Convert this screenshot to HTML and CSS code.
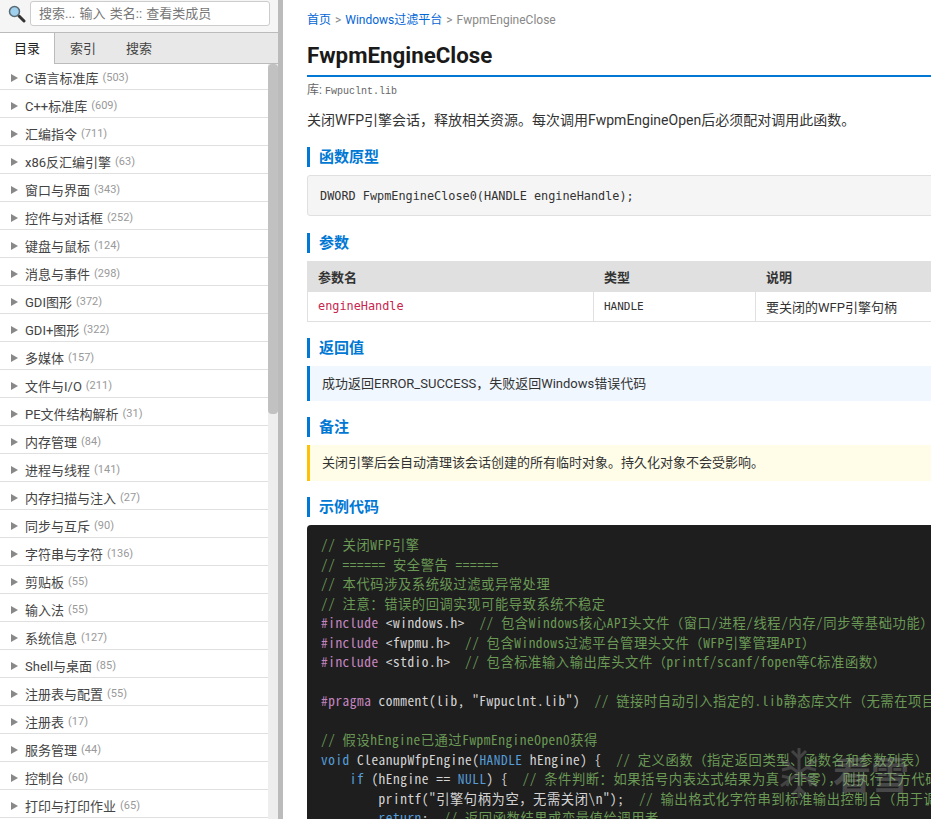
FILE: index.html
```html
<!DOCTYPE html>
<html lang="zh-CN">
<head>
    <meta charset="UTF-8">
    <title>FwpmEngineClose</title>
    <link rel="stylesheet" href="styles.css">
</head>
<body>
    <div class="sidebar">
        <div class="search-bar">
            <svg class="search-icon" width="18" height="18" viewBox="0 0 18 18">
                <line x1="11" y1="11" x2="16" y2="16" stroke="#333" stroke-width="3" stroke-linecap="round"/>
                <circle cx="6.5" cy="6.5" r="5" fill="#9fd0ee" stroke="#5a6a75" stroke-width="1.5"/>
            </svg>
            <input class="search-input" type="text" placeholder="搜索... 输入 类名:: 查看类成员">
        </div>
        <div class="tabs">
            <div class="tab active">目录</div>
            <div class="tab">索引</div>
            <div class="tab">搜索</div>
        </div>
        <div class="tree-wrap">
            <ul class="tree">
                <li><span class="arrow"></span>C语言标准库<span class="count">(503)</span></li>
                <li><span class="arrow"></span>C++标准库<span class="count">(609)</span></li>
                <li><span class="arrow"></span>汇编指令<span class="count">(711)</span></li>
                <li><span class="arrow"></span>x86反汇编引擎<span class="count">(63)</span></li>
                <li><span class="arrow"></span>窗口与界面<span class="count">(343)</span></li>
                <li><span class="arrow"></span>控件与对话框<span class="count">(252)</span></li>
                <li><span class="arrow"></span>键盘与鼠标<span class="count">(124)</span></li>
                <li><span class="arrow"></span>消息与事件<span class="count">(298)</span></li>
                <li><span class="arrow"></span>GDI图形<span class="count">(372)</span></li>
                <li><span class="arrow"></span>GDI+图形<span class="count">(322)</span></li>
                <li><span class="arrow"></span>多媒体<span class="count">(157)</span></li>
                <li><span class="arrow"></span>文件与I/O<span class="count">(211)</span></li>
                <li><span class="arrow"></span>PE文件结构解析<span class="count">(31)</span></li>
                <li><span class="arrow"></span>内存管理<span class="count">(84)</span></li>
                <li><span class="arrow"></span>进程与线程<span class="count">(141)</span></li>
                <li><span class="arrow"></span>内存扫描与注入<span class="count">(27)</span></li>
                <li><span class="arrow"></span>同步与互斥<span class="count">(90)</span></li>
                <li><span class="arrow"></span>字符串与字符<span class="count">(136)</span></li>
                <li><span class="arrow"></span>剪贴板<span class="count">(55)</span></li>
                <li><span class="arrow"></span>输入法<span class="count">(55)</span></li>
                <li><span class="arrow"></span>系统信息<span class="count">(127)</span></li>
                <li><span class="arrow"></span>Shell与桌面<span class="count">(85)</span></li>
                <li><span class="arrow"></span>注册表与配置<span class="count">(55)</span></li>
                <li><span class="arrow"></span>注册表<span class="count">(17)</span></li>
                <li><span class="arrow"></span>服务管理<span class="count">(44)</span></li>
                <li><span class="arrow"></span>控制台<span class="count">(60)</span></li>
                <li><span class="arrow"></span>打印与打印作业<span class="count">(65)</span></li>
            </ul>
            <div class="scrollbar"><div class="thumb"></div></div>
        </div>
    </div>
    <div class="divider"></div>
    <div class="content">
        <div class="breadcrumb"><a>首页</a><span class="sep">&gt;</span><a>Windows过滤平台</a><span class="sep">&gt;</span>FwpmEngineClose</div>
        <h1>FwpmEngineClose</h1>
        <div class="lib">库: <code>Fwpuclnt.lib</code></div>
        <p class="desc">关闭WFP引擎会话，释放相关资源。每次调用FwpmEngineOpen后必须配对调用此函数。</p>

        <h2>函数原型</h2>
        <pre class="proto">DWORD FwpmEngineClose0(HANDLE engineHandle);</pre>

        <h2>参数</h2>
        <table class="params">
            <tr><th class="col-name">参数名</th><th class="col-type">类型</th><th>说明</th></tr>
            <tr><td><code class="param-name">engineHandle</code></td><td><code class="param-type">HANDLE</code></td><td>要关闭的WFP引擎句柄</td></tr>
        </table>

        <h2>返回值</h2>
        <div class="note note-info">成功返回ERROR_SUCCESS，失败返回Windows错误代码</div>

        <h2>备注</h2>
        <div class="note note-warn">关闭引擎后会自动清理该会话创建的所有临时对象。持久化对象不会受影响。</div>

        <h2>示例代码</h2>
        <pre class="code"><span class="c">// 关闭WFP引擎</span>
<span class="c">// ====== 安全警告 ======</span>
<span class="c">// 本代码涉及系统级过滤或异常处理</span>
<span class="c">// 注意：错误的回调实现可能导致系统不稳定</span>
<span class="p">#include</span> &lt;windows.h&gt;  <span class="c">// 包含Windows核心API头文件（窗口/进程/线程/内存/同步等基础功能）</span>
<span class="p">#include</span> &lt;fwpmu.h&gt;  <span class="c">// 包含Windows过滤平台管理头文件（WFP引擎管理API）</span>
<span class="p">#include</span> &lt;stdio.h&gt;  <span class="c">// 包含标准输入输出库头文件（printf/scanf/fopen等C标准函数）</span>

<span class="p">#pragma</span> comment(lib, "Fwpuclnt.lib")  <span class="c">// 链接时自动引入指定的.lib静态库文件（无需在项目设置中添加）</span>

<span class="c">// 假设hEngine已通过FwpmEngineOpen0获得</span>
<span class="k">void</span> CleanupWfpEngine(<span class="k">HANDLE</span> hEngine) {  <span class="c">// 定义函数（指定返回类型、函数名和参数列表）</span>
    <span class="k">if</span> (hEngine == <span class="k">NULL</span>) {  <span class="c">// 条件判断：如果括号内表达式结果为真（非零），则执行下方代码块</span>
        printf("引擎句柄为空，无需关闭\n");  <span class="c">// 输出格式化字符串到标准输出控制台（用于调试）</span>
        <span class="k">return</span>;  <span class="c">// 返回函数结果或变量值给调用者</span></pre>
    </div>
    <div class="watermark">
        <svg width="38" height="52" viewBox="0 0 38 52">
            <g stroke="#999" stroke-width="3" fill="none">
                <line x1="19" y1="1" x2="19" y2="51"/>
                <line x1="1" y1="13" x2="37" y2="39"/>
                <line x1="37" y1="13" x2="1" y2="39"/>
                <path d="M12 4l7 7 7-7M12 48l7-7 7 7M2 23l8-2-3-8M36 23l-8-2 3-8M2 29l8 2-3 8M36 29l-8 2 3 8"/>
            </g>
        </svg>
        <span class="wm-text">看雪</span>
    </div>
</body>
</html>
```

FILE: styles.css
```css
* {
    box-sizing: border-box;
}

html, body {
    height: 100%;
}

body {
    margin: 0;
    display: flex;
    overflow: hidden;
    background: #fff;
    color: #333;
    font-family: Roboto, "Noto Sans CJK SC", sans-serif;
    font-size: 13px;
}

/* left panel */
.sidebar {
    width: 278px;
    flex: none;
    display: flex;
    flex-direction: column;
    height: 819px;
    background: #f5f5f5;
}

.search-bar {
    height: 33px;
    display: flex;
    align-items: flex-start;
    gap: 4px;
    padding: 1px 8px 0;
    border-bottom: 1px solid #bbb;
    background: #f5f5f5;
}

.search-icon {
    flex: none;
    margin-top: 4px;
}

.search-input {
    flex: 1;
    height: 25px;
    min-width: 0;
    padding: 0 8px;
    border: 1px solid #ccc;
    border-radius: 3px;
    font-family: Roboto, "Noto Sans CJK SC", sans-serif;
    font-size: 13px;
    word-spacing: 1px;
}

.search-input::placeholder {
    color: #777;
}

.tabs {
    height: 31px;
    flex: none;
    display: flex;
    background: #e8e8e8;
    border-bottom: 1px solid #bbb;
}

.tab {
    width: 56px;
    line-height: 31px;
    text-align: center;
    color: #444;
}

.tab.active {
    width: 55px;
    height: 31px;
    background: #fff;
    border-right: 1px solid #bbb;
    color: #222;
}

.tree-wrap {
    flex: 1;
    display: flex;
    min-height: 0;
    overflow: hidden;
    background: #fff;
}

.tree {
    flex: 1;
    margin: -2px 0 0;
    padding: 0;
    list-style: none;
}

.tree li {
    height: 28px;
    display: flex;
    align-items: center;
    padding: 4px 0 0 11px;
    border-bottom: 1px solid #e0e0e0;
    color: #444;
    white-space: nowrap;
}

.arrow {
    width: 0;
    height: 0;
    margin-right: 7px;
    border-left: 7px solid #888;
    border-top: 4px solid transparent;
    border-bottom: 4px solid transparent;
}

.count {
    margin-left: 4px;
    color: #999;
    font-size: 11px;
}

.scrollbar {
    width: 10px;
    flex: none;
    background: #eee;
}

.thumb {
    height: 350px;
    background: #c1c1c1;
    border-radius: 4px;
}

.divider {
    width: 5px;
    flex: none;
    background: #bbb;
}

/* right panel */
.content {
    flex: none;
    width: 800px;
    padding: 12px 24px;
    overflow: hidden;
}

.breadcrumb {
    font-size: 12px;
    line-height: 16px;
    color: #888;
}

.breadcrumb a {
    color: #0366d6;
}

.sep {
    margin: 0 4px;
}

h1 {
    margin: 11px 0 0;
    height: 38px;
    font-size: 22.3px;
    line-height: 32px;
    font-weight: 700;
    color: #1a1a1a;
    border-bottom: 2px solid #0078d4;
}

.lib {
    height: 16px;
    margin-top: 5px;
    font-size: 12px;
    line-height: 16px;
    color: #666;
}

.lib code {
    font-family: "Liberation Mono", monospace;
    font-size: 10px;
}

.desc {
    margin: 12px 0 17px;
    font-size: 14px;
    line-height: 20px;
}

h2 {
    margin: 16px 0 0;
    padding-left: 9px;
    height: 20px;
    border-left: 3px solid #0078d4;
    font-size: 15px;
    line-height: 20px;
    font-weight: 700;
    color: #0078d4;
}

.proto {
    margin: 8px 0 17px;
    height: 41px;
    padding: 0 12px;
    border: 1px solid #e0e0e0;
    border-radius: 3px;
    background: #f5f5f5;
    font-family: "DejaVu Sans Mono", monospace;
    font-size: 11.85px;
    line-height: 40px;
}

.params {
    margin-top: 8px;
    width: 100%;
    border-collapse: collapse;
}

.params th, .params td {
    border: 1px solid #e0e0e0;
    padding: 0 10px;
    text-align: left;
    font-size: 13px;
}

.params th {
    height: 30px;
    background: #e0e0e0;
    font-weight: 700;
    color: #333;
}

.params td {
    height: 30px;
}

.col-name {
    width: 286px;
}

.col-type {
    width: 162px;
}

.param-name {
    font-family: "DejaVu Sans Mono", monospace;
    font-size: 11.85px;
    color: #c7254e;
    vertical-align: 1px;
}

.param-type {
    font-family: "DejaVu Sans Mono", monospace;
    font-size: 11px;
    vertical-align: 1px;
}

.note {
    margin-top: 8px;
    height: 35px;
    padding-left: 12px;
    border-left: 3px solid #0078d4;
    line-height: 35px;
    font-size: 13px;
}

.note-info {
    background: #f0f7ff;
}

.note-warn {
    height: 36px;
    line-height: 36px;
    background: #fffde7;
    border-left-color: #ffc107;
}

.code {
    margin: 8px 0 0;
    padding: 10px 14px;
    border-radius: 4px;
    background: #1e1e1e;
    color: #d4d4d4;
    font-family: "Noto Sans Mono CJK SC", "DejaVu Sans Mono", monospace;
    font-size: 13.3px;
    letter-spacing: 0.55px;
    line-height: 19.5px;
}

.c {
    color: #6a9955;
}

.p {
    color: #c586c0;
}

.k {
    color: #569cd6;
}

.watermark {
    position: absolute;
    left: 780px;
    top: 747px;
    display: flex;
    align-items: center;
    gap: 15px;
    opacity: 0.3;
    color: #aaa;
    pointer-events: none;
}

.wm-text {
    font-family: "Noto Sans CJK SC", sans-serif;
    font-size: 38px;
    font-weight: 700;
    line-height: 46px;
}
```
